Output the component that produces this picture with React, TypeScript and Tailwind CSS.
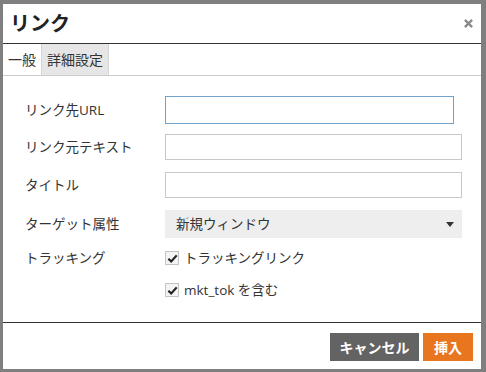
import React from 'react';

const FONT = '"Open Sans", "Noto Sans CJK JP", sans-serif';

function Check() {
  return (
    <span className="flex h-[14px] w-[14px] items-center justify-center border border-[#c4c4c4] bg-[#f4f4f4]">
      <svg viewBox="0 0 12 12" className="h-[11px] w-[11px]">
        <path d="M1.5 6.2 L4.6 9.2 L10.6 2.6" fill="none" stroke="#222" strokeWidth="2.4" strokeLinejoin="miter" />
      </svg>
    </span>
  );
}

function Row({ label, children, h, mb }: { label?: string; children: React.ReactNode; h: string; mb: string }) {
  return (
    <div className={`flex items-center ${h} ${mb}`}>
      <div className="w-[140px] shrink-0 text-[#333]">{label}</div>
      {children}
    </div>
  );
}

export default function App() {
  return (
    <div
      className="h-[372px] w-[486px] bg-[#7f7f7f] pb-[3px] pl-[3px] pr-[5px] pt-[4px]"
      style={{ fontFamily: FONT }}
    >
      <div className="flex h-full flex-col bg-white">
        {/* Header */}
        <div className="flex h-[40px] shrink-0 items-center justify-between border-b border-[#333] pl-[7px] pr-[8px]">
          <span className="text-[20px] font-bold text-[#222]">リンク</span>
          <svg viewBox="0 0 10 10" className="h-[9px] w-[9px]">
            <path d="M1 1 L9 9 M9 1 L1 9" stroke="#8a8a8a" strokeWidth="2.6" />
          </svg>
        </div>

        {/* Tabs */}
        <div className="flex h-[32px] shrink-0 border-b border-[#ccc] text-[14px] text-[#333]">
          <div className="flex items-center pl-[5px] pr-[5px]">一般</div>
          <div className="flex items-center border-x border-[#d4d4d4] bg-[#e6e6e6] px-[5px]">詳細設定</div>
        </div>

        {/* Form */}
        <div className="flex-1 pl-[22px] pt-[20px] text-[13.5px]">
          <Row label="リンク先URL" h="h-[28px]" mb="mb-[10px]">
            <div className="h-[28px] w-[289px] border border-[#6fa2cc]" />
          </Row>
          <Row label="リンク元テキスト" h="h-[26px]" mb="mb-[12px]">
            <div className="h-[26px] w-[297px] border border-[#c8c8c8]" />
          </Row>
          <Row label="タイトル" h="h-[26px]" mb="mb-[12px]">
            <div className="h-[26px] w-[297px] border border-[#c8c8c8]" />
          </Row>
          <Row label="ターゲット属性" h="h-[28px]" mb="mb-[6px]">
            <div className="flex h-[28px] w-[297px] items-center justify-between bg-[#eeeeee] pl-[11px] pr-[8px] text-[#333]">
              <span>新規ウィンドウ</span>
              <svg viewBox="0 0 8 5" className="h-[5px] w-[8px]">
                <path d="M0 0 H8 L4 5 Z" fill="#333" />
              </svg>
            </div>
          </Row>
          <Row label="トラッキング" h="h-[28px]" mb="mb-[4px]">
            <div className="flex items-center gap-[5px] text-[#333]">
              <Check />
              <span>トラッキングリンク</span>
            </div>
          </Row>
          <Row h="h-[28px]" mb="mb-0">
            <div className="flex items-center gap-[5px] text-[#333]">
              <Check />
              <span>mkt_tok を含む</span>
            </div>
          </Row>
        </div>

        {/* Footer */}
        <div className="flex h-[47px] shrink-0 items-start justify-end gap-[4px] border-t border-[#333] pr-[8px] pt-[10px]">
          <button className="flex h-[28px] w-[89px] items-center justify-center bg-[#636363] text-[14px] font-bold text-white">
            キャンセル
          </button>
          <button className="flex h-[28px] w-[50px] items-center justify-center bg-[#e8761f] text-[14px] font-bold text-white">
            挿入
          </button>
        </div>
      </div>
    </div>
  );
}
